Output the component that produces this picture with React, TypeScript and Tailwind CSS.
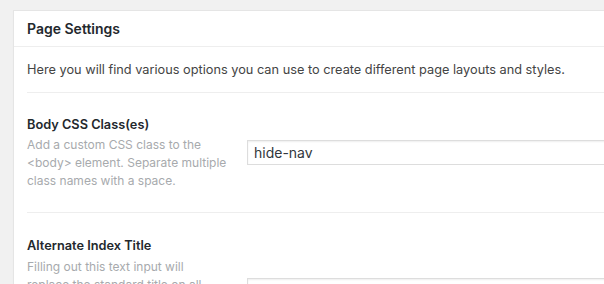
import React from "react";

const font = { fontFamily: 'Inter, "Liberation Sans", Arial, sans-serif' };

export default function App() {
  return (
    <div className="w-[604px] h-[284px] overflow-hidden bg-[#f1f1f1] pt-[10px] pl-[13px]" style={font}>
      <div className="w-[640px] bg-white border border-[#e5e5e5] shadow-[0_1px_1px_rgba(0,0,0,0.04)]">
        <div className="h-[36px] flex items-center px-[13px] border-b border-[#eeeeee]">
          <h2 className="text-[14px] font-semibold text-[#23282d] leading-none">Page Settings</h2>
        </div>
        <div className="px-[13px]">
          <p className="pt-[14px] pb-[13px] text-[12.75px] leading-[18px] text-[#444] border-b border-[#eeeeee]">
            Here you will find various options you can use to create different page layouts and styles.
          </p>
          <div className="flex pt-[23px] pb-[22px] border-b border-[#eeeeee]">
            <div className="w-[220px] shrink-0">
              <div className="text-[12.75px] leading-[18px] font-semibold text-[#23282d]">Body CSS Class(es)</div>
              <p className="mt-[2px] whitespace-nowrap text-[12px] leading-[18px] text-[#a7aaad]">
                Add a custom CSS class to the
                <br />
                &lt;body&gt; element. Separate multiple
                <br />
                class names with a space.
              </p>
            </div>
            <div className="pt-[24px]">
              <input
                readOnly
                value="hide-nav"
                className="w-[400px] h-[25px] px-[6px] border border-[#dddddd] shadow-[inset_0_1px_2px_rgba(0,0,0,0.07)] text-[14px] text-[#32373c] outline-none"
                style={font}
              />
            </div>
          </div>
          <div className="flex pt-[24px]">
            <div className="w-[220px] shrink-0">
              <div className="text-[12.75px] leading-[18px] font-semibold text-[#23282d]">Alternate Index Title</div>
              <p className="mt-[3px] whitespace-nowrap text-[12px] leading-[18px] text-[#a7aaad]">
                Filling out this text input will
                <br />
                replace the standard title on all
                <br />
                index pages.
              </p>
            </div>
            <div className="pt-[41px]">
              <input
                readOnly
                value=""
                className="w-[400px] h-[25px] px-[6px] border border-[#dddddd] shadow-[inset_0_1px_2px_rgba(0,0,0,0.07)] text-[14px] text-[#32373c] outline-none"
                style={font}
              />
            </div>
          </div>
        </div>
      </div>
    </div>
  );
}
